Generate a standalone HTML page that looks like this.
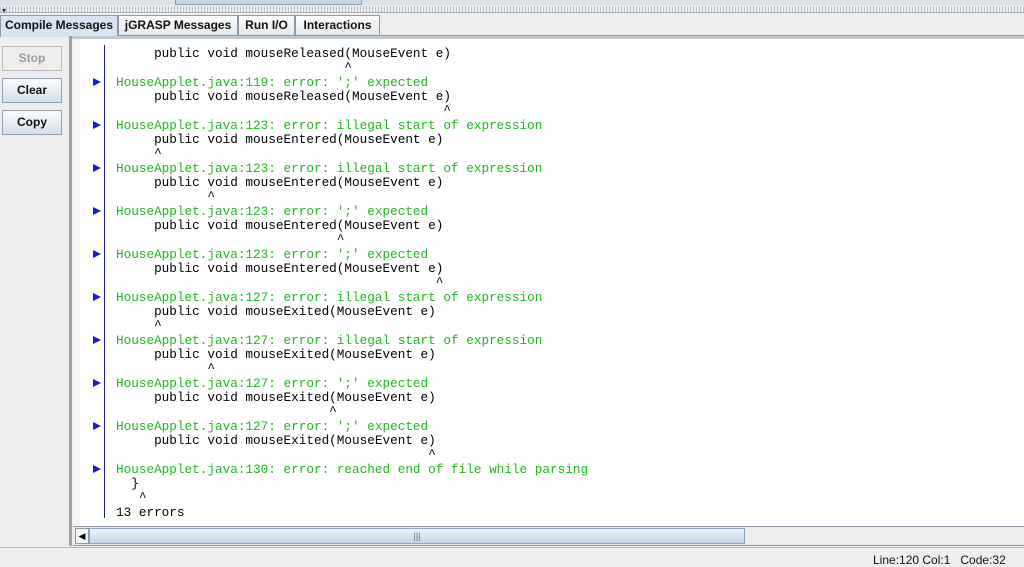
<!DOCTYPE html><html><head><style>
body{margin:0;width:1024px;height:560px;overflow:hidden;background:#eeeeee;font-family:"Liberation Sans",sans-serif;position:relative}
.abs{position:absolute}
.tab{position:absolute;top:15px;height:19px;border:1px solid #8e99a8;border-bottom:none;font-size:12px;font-weight:bold;line-height:19px;text-align:center;background:linear-gradient(#fdfdfd,#e4e7ea);color:#111}
.btn{position:absolute;left:2px;width:58px;height:23px;border:1px solid #8e9cae;font-size:12px;font-weight:bold;line-height:23px;text-align:center;background:linear-gradient(#fbfcfe,#d3e0ef);color:#111}
pre{margin:0;position:absolute;left:116px;top:47px;font-family:"Liberation Mono",monospace;font-size:12.7px;line-height:14.33px;color:#000}
.g{color:#22b522}
.ar{position:absolute;left:93px;width:0;height:0;border-left:8px solid #1020d0;border-top:4px solid transparent;border-bottom:4px solid transparent}
</style></head><body>
<div class="abs" style="left:0;top:0;width:1024px;height:5px;background:#dde3ea"></div>
<div class="abs" style="left:175px;top:0;width:185px;height:4px;background:#c9d6e6;border:1px solid #8e99a8;border-top:none"></div>
<div class="abs" style="left:0;top:6px;width:1024px;height:6px;background:repeating-linear-gradient(90deg,#b8c0cc 0 1px,#eee 1px 3px)"></div>
<div class="abs" style="left:0;top:12px;width:1024px;height:1px;background:#a8b0ba"></div>
<div class="abs" style="left:2px;top:6px;font-size:8px;color:#335">▾</div>
<div class="abs" style="left:0;top:35px;width:1024px;height:1px;background:#8e99a8"></div>
<div class="tab" style="left:0;width:116px;background:#d8e4f1;height:21px">Compile Messages</div>
<div class="tab" style="left:118px;width:118px">jGRASP Messages</div>
<div class="tab" style="left:238px;width:55px">Run I/O</div>
<div class="tab" style="left:295px;width:83px">Interactions</div>
<div class="btn" style="top:46px;color:#999;background:#eee;border-color:#b8b8b8">Stop</div>
<div class="btn" style="top:78px">Clear</div>
<div class="btn" style="top:110px">Copy</div>
<div class="abs" style="left:69px;top:36px;width:3px;height:510px;background:#9ba3ad"></div>
<div class="abs" style="left:72px;top:36px;width:952px;height:3px;background:#c2c8d0"></div>
<div class="abs" style="left:73px;top:39px;width:951px;height:487px;background:#fff"></div>
<div class="abs" style="left:73px;top:39px;width:7px;height:487px;background:#f4f4f4"></div>
<div class="abs" style="left:104px;top:45px;width:1px;height:473px;background:#1a1aa0"></div>
<div class="abs" style="left:73px;top:526px;width:951px;height:18px;background:#eee;border-top:1px solid #8e99a8;border-bottom:1px solid #8e99a8"></div>
<div class="abs" style="left:75px;top:528px;width:12px;height:14px;background:#f7f7f7;border:1px solid #8e99a8;font-size:9px;line-height:14px;text-align:center">◀</div>
<div class="abs" style="left:89px;top:528px;width:654px;height:14px;background:linear-gradient(#eef3fa,#c3d5ec);border:1px solid #8ea3bf;font-size:9px;text-align:center;line-height:14px;color:#667">|||</div>
<div class="abs" style="left:0;top:547px;width:1024px;height:1px;background:#b0b8c2"></div>
<div class="abs" style="left:873px;top:553px;font-size:12px;color:#111">Line:120 Col:1 &nbsp; Code:32</div>
<div class="ar" style="top:78px"></div><div class="ar" style="top:121px"></div><div class="ar" style="top:164px"></div><div class="ar" style="top:207px"></div><div class="ar" style="top:250px"></div><div class="ar" style="top:293px"></div><div class="ar" style="top:336px"></div><div class="ar" style="top:379px"></div><div class="ar" style="top:422px"></div><div class="ar" style="top:465px"></div>
<pre>     public void mouseReleased(MouseEvent e)
                              ^
<span class="g">HouseApplet.java:119: error: ';' expected</span>
     public void mouseReleased(MouseEvent e)
                                           ^
<span class="g">HouseApplet.java:123: error: illegal start of expression</span>
     public void mouseEntered(MouseEvent e)
     ^
<span class="g">HouseApplet.java:123: error: illegal start of expression</span>
     public void mouseEntered(MouseEvent e)
            ^
<span class="g">HouseApplet.java:123: error: ';' expected</span>
     public void mouseEntered(MouseEvent e)
                             ^
<span class="g">HouseApplet.java:123: error: ';' expected</span>
     public void mouseEntered(MouseEvent e)
                                          ^
<span class="g">HouseApplet.java:127: error: illegal start of expression</span>
     public void mouseExited(MouseEvent e)
     ^
<span class="g">HouseApplet.java:127: error: illegal start of expression</span>
     public void mouseExited(MouseEvent e)
            ^
<span class="g">HouseApplet.java:127: error: ';' expected</span>
     public void mouseExited(MouseEvent e)
                            ^
<span class="g">HouseApplet.java:127: error: ';' expected</span>
     public void mouseExited(MouseEvent e)
                                         ^
<span class="g">HouseApplet.java:130: error: reached end of file while parsing</span>
  }
   ^
13 errors</pre>
</body></html>
